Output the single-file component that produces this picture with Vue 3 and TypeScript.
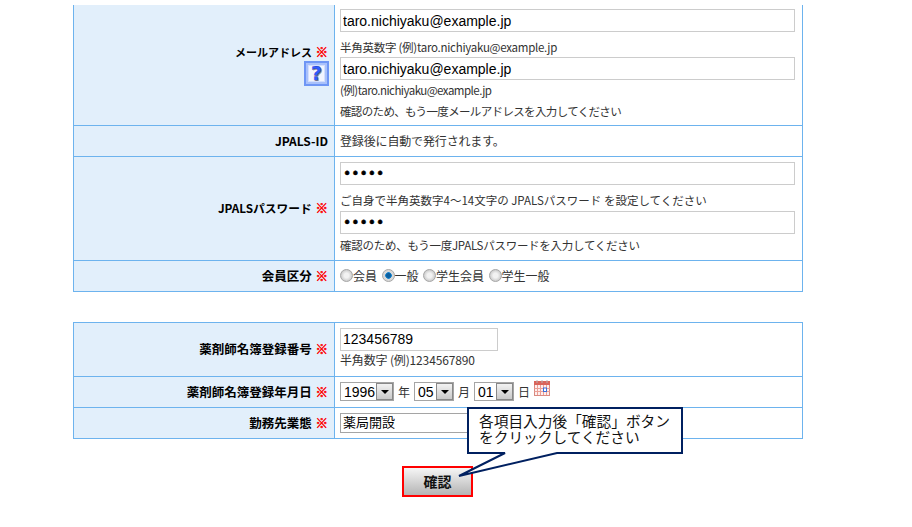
<script setup lang="ts">
const years = ['1996']
const radios = [
  { label: '会員', checked: false },
  { label: '一般', checked: true },
  { label: '学生会員', checked: false },
  { label: '学生一般', checked: false },
]
</script>

<template>
  <main class="page">
    <table class="form first">
      <tbody>
        <tr class="r-mail">
          <th class="kana-label">
            <div class="label-line">メールアドレス <span class="req">※</span></div>
            <div class="help"><span class="help-inner"><span class="q">?</span></span></div>
          </th>
          <td>
            <div class="stack mail">
              <input class="field wide" type="text" value="taro.nichiyaku@example.jp" />
              <p class="note n1">半角英数字 (例)taro.nichiyaku@example.jp</p>
              <input class="field wide" type="text" value="taro.nichiyaku@example.jp" />
              <p class="note n2">(例)taro.nichiyaku@example.jp</p>
              <p class="note n3">確認のため、もう一度メールアドレスを入力してください</p>
            </div>
          </td>
        </tr>
        <tr class="r-id">
          <th class="id-label">JPALS-ID</th>
          <td><span class="id-text">登録後に自動で発行されます。</span></td>
        </tr>
        <tr class="r-pass">
          <th class="pass-label">JPALSパスワード <span class="req">※</span></th>
          <td>
            <div class="stack pass">
              <input class="field wide dots" type="password" value="12345" />
              <p class="note n4">ご自身で半角英数字4～14文字の JPALSパスワード を設定してください</p>
              <input class="field wide dots" type="password" value="12345" />
              <p class="note n5">確認のため、もう一度JPALSパスワードを入力してください</p>
            </div>
          </td>
        </tr>
        <tr class="r-kind">
          <th>会員区分 <span class="req">※</span></th>
          <td>
            <div class="radios">
              <label v-for="r in radios" :key="r.label" class="radio">
                <input type="radio" name="kind" :checked="r.checked" />{{ r.label }}
              </label>
            </div>
          </td>
        </tr>
      </tbody>
    </table>

    <table class="form second">
      <tbody>
        <tr class="r-num">
          <th>薬剤師名簿登録番号 <span class="req">※</span></th>
          <td>
            <div class="stack num">
              <input class="field short" type="text" value="123456789" />
              <p class="note n6">半角数字 (例)1234567890</p>
            </div>
          </td>
        </tr>
        <tr class="r-date">
          <th>薬剤師名簿登録年月日 <span class="req">※</span></th>
          <td>
            <div class="dates">
              <span class="sel y"><select><option v-for="y in years" :key="y">{{ y }}</option></select><i class="arrow"></i></span>
              <span class="unit">年</span>
              <span class="sel m"><select><option>05</option></select><i class="arrow"></i></span>
              <span class="unit">月</span>
              <span class="sel d"><select><option>01</option></select><i class="arrow"></i></span>
              <span class="unit">日</span>
              <svg class="cal" width="16" height="16" viewBox="0 0 16 16">
                <rect x="0.5" y="1.5" width="15" height="14" fill="#fdeeee" stroke="#d98a80" />
                <rect x="0" y="1" width="16" height="4" fill="#d9645a" />
                <path d="M3 0v3M8 0v3M13 0v3" stroke="#b8b0b0" />
                <path d="M0.5 8.5h15M0.5 11.5h15M3.5 5v10M6.5 5v10M9.5 5v10M12.5 5v10" stroke="#eb9f95" />
                <rect x="9.5" y="8" width="3" height="3.5" fill="#fff" stroke="#3a6fd8" />
              </svg>
            </div>
          </td>
        </tr>
        <tr class="r-work">
          <th>勤務先業態 <span class="req">※</span></th>
          <td>
            <select class="work"><option>薬局開設</option></select>
          </td>
        </tr>
      </tbody>
    </table>

    <div class="actions">
      <button class="confirm" type="button">確認</button>
    </div>

    <aside class="callout">
      <svg class="bubble" width="240" height="80" viewBox="0 0 240 80">
        <path
          d="M11 1H225V46H100L2 69L48 46H11Z"
          fill="#fff"
          stroke="#002060"
          stroke-width="2"
        />
      </svg>
      <p class="bubble-text">各項目入力後「確認」ボタン<br />をクリックしてください</p>
    </aside>
  </main>
</template>

<style>
html, body { margin: 0; background: #fff; }
</style>

<style scoped>
.page {
  position: relative;
  width: 912px;
  height: 527px;
  overflow: hidden;
  padding-top: 5px;
  box-sizing: border-box;
  background: #fff;
  color: #333;
  font: 12px/16px "Noto Sans CJK JP", "Liberation Sans", sans-serif;
}
p { margin: 0; }
.form {
  width: 730px;
  margin-left: 73px;
  border-collapse: collapse;
  table-layout: fixed;
}
.second { margin-top: 30px; }
th, td {
  border: 1px solid #6db3ee;
  padding: 0 5px;
  box-sizing: border-box;
}
.first .r-mail th, .first .r-mail td { border-top: 0; }
th {
  width: 261px;
  padding-right: 6px;
  background: #e2effb;
  color: #000;
  font-size: 12.5px;
  font-weight: 700;
  text-align: right;
}
.kana-label { font-size: 11px; }
.pass-label { font-size: 11.75px; }
.id-label { font-size: 12px; }
td { padding-left: 5px; vertical-align: top; }
.req {
  color: #f00;
  margin-left: 1px;
  font-size: 12.5px;
  -webkit-text-stroke: 0.5px #f00;
}
.r-mail { height: 120px; }
.r-id { height: 31px; }
.r-pass { height: 104px; }
.r-kind { height: 31px; }
.r-num { height: 54px; }
.r-date { height: 31px; }
.r-work { height: 31px; }
.r-id td { vertical-align: middle; }
.id-text { letter-spacing: -0.15px; }
.label-line { line-height: 16px; }
.help { display: flex; justify-content: flex-end; margin-top: 1px; }
.help-inner {
  width: 25px;
  height: 25px;
  box-sizing: border-box;
  display: flex;
  align-items: center;
  justify-content: center;
  margin-right: -1px;
  border: 2px solid #6f96f5;
  background: #f2f5ff;
  box-shadow: inset 0 0 0 2px #a9c1fb, inset 0 0 0 3px #d4dffd;
}
.q {
  color: #2f5cff;
  font: 900 19px/20px "DejaVu Sans", sans-serif;
  -webkit-text-stroke: 0.25px #14148f;
  text-shadow: 1px 1px 0 #8a8a8a;
}
.stack { display: flex; flex-direction: column; align-items: flex-start; }
.mail { padding-top: 4px; }
.pass { padding-top: 5px; }
.num { padding-top: 5px; }
.field {
  display: block;
  height: 23px;
  box-sizing: border-box;
  border: 1px solid #ccc;
  padding: 0 2px;
  background: #fff;
  color: #000;
  font: 14px "Liberation Sans", sans-serif;
  outline: none;
}
.wide { width: 455px; }
.short { width: 158px; }
.dots { font-family: "DejaVu Sans", sans-serif; -webkit-text-stroke: 0.5px #000; }
.note { white-space: nowrap; font-size: 11.5px; }
.n1 { margin-top: 7px; margin-bottom: 2px; letter-spacing: -0.27px; }
.n2 { margin-top: 2px; margin-bottom: 5px; letter-spacing: -0.53px; }
.n3 { letter-spacing: -0.65px; }
.n4 { margin-top: 7px; margin-bottom: 3px; }
.n5 { margin-top: 3px; letter-spacing: -0.27px; }
.n6 { margin-top: 1px; font-size: 12px; letter-spacing: -0.15px; }
.radios { display: flex; align-items: center; height: 30px; gap: 4.5px; }
.radio { display: inline-flex; align-items: center; }
.radio input {
  appearance: none;
  width: 13px;
  height: 13px;
  margin: 0;
  border: 1px solid #a8a8a8;
  border-radius: 50%;
  box-sizing: border-box;
  background: radial-gradient(circle at 50% 50%, #f2f2f2 0 30%, #c4c4c4 80%);
}
.radio input:checked {
  background: radial-gradient(circle, #0b5f9f 0 2px, #1a86d0 3px, #d8d8d8 3.6px);
}
.dates {
  display: flex;
  align-items: center;
  height: 29px;
  padding-top: 1px;
  box-sizing: border-box;
}
.sel {
  display: inline-flex;
  align-items: stretch;
  height: 19px;
  box-sizing: border-box;
  border: 1px solid #a5a5a5;
  background: #fff;
}
.sel select {
  appearance: none;
  border: 0;
  outline: none;
  background: #fff;
  padding: 0 0 0 3px;
  color: #000;
  font: 14px "Liberation Sans", sans-serif;
}
.y select { width: 35px; }
.m select, .d select { width: 21px; }
.arrow {
  position: relative;
  display: block;
  width: 17px;
  box-sizing: border-box;
  border: 1px solid #888;
  background: linear-gradient(#f2f2f2, #c9c9c9);
}
.arrow::after {
  content: "";
  position: absolute;
  left: 4px;
  top: 6px;
  border: 4px solid transparent;
  border-top: 4px solid #000;
  border-bottom: 0;
}
.unit { width: 20px; text-align: center; color: #333; }
.cal { margin: -7px 0 0 0; }
.work {
  display: block;
  margin-top: 5px;
  width: 135px;
  height: 20px;
  appearance: none;
  border: 1px solid #a5a5a5;
  border-radius: 0;
  background: #fff;
  padding: 0 2px 2px;
  color: #000;
  font: 13px/14px "Noto Sans CJK JP", sans-serif;
  outline: none;
}
.actions { display: flex; margin: 27px 0 0 402px; }
.confirm {
  width: 71px;
  height: 31px;
  box-sizing: border-box;
  border: 2px solid #f00;
  background: linear-gradient(#f6f6f6, #b4b4b4);
  padding: 0;
  color: #111;
  font: 700 14px "Noto Sans CJK JP", sans-serif;
}
.callout { position: absolute; left: 457px; top: 407px; width: 240px; height: 80px; }
.bubble { position: absolute; left: 0; top: 0; overflow: visible; }
.bubble-text {
  position: absolute;
  left: 22px;
  top: 6px;
  white-space: nowrap;
  color: #111;
  font: 14.7px/16px "Noto Sans CJK JP", sans-serif;
}
</style>
